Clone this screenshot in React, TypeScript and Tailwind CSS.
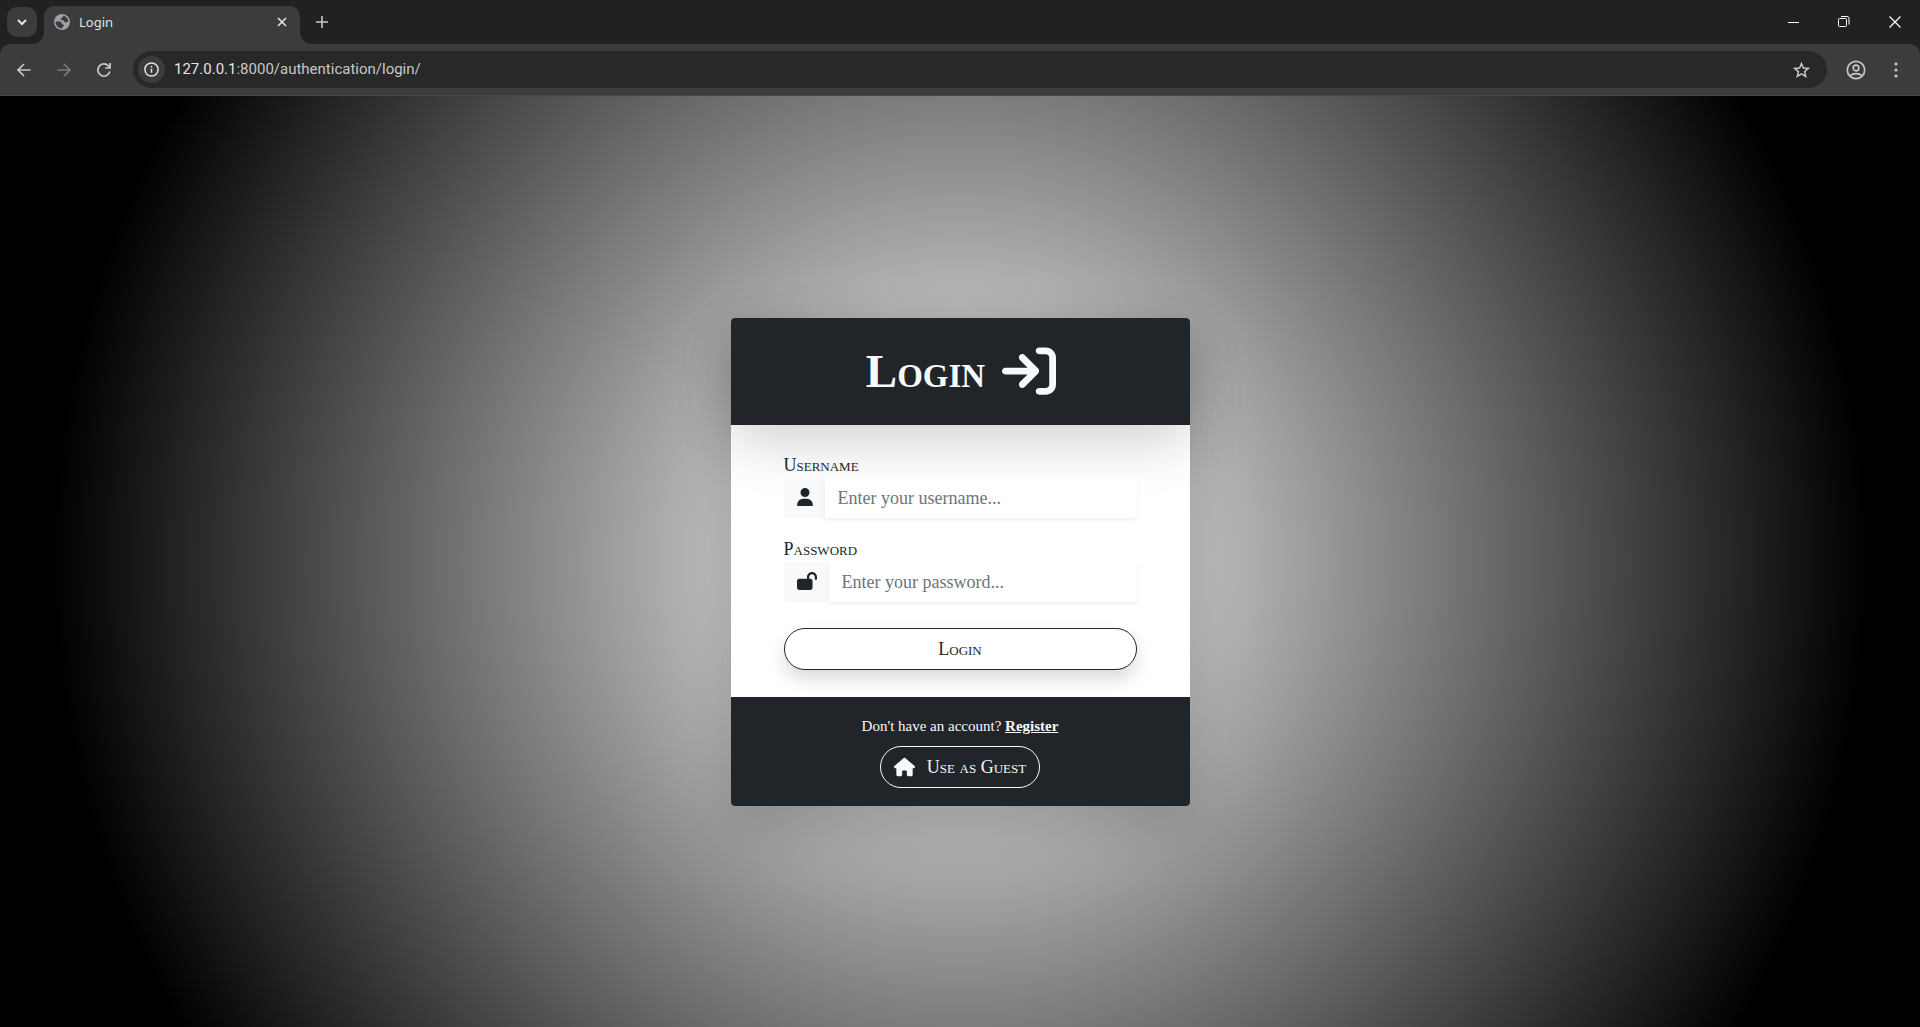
import React from 'react';
import { FaArrowRightToBracket, FaHouse, FaLockOpen, FaUser } from 'react-icons/fa6';

function TabStrip() {
  return (
    <div className="flex h-11 bg-[#202221]">
      <div className="w-11 shrink-0 pl-[7px] pt-[7px]">
        <button aria-label="Search tabs" className="flex h-[30px] w-[30px] items-center justify-center rounded-[10px] bg-[#3c3c3c] text-[#e3e3e3]">
          <svg width="10" height="10" viewBox="0 0 10 10" fill="none" stroke="currentColor" strokeWidth="2"><path d="M1 3l4 4 4-4" /></svg>
        </button>
      </div>
      <div className="relative mt-[6px] flex w-64 shrink-0 items-center rounded-t-[10px] bg-[#3c3c3c] pb-[6px] pl-[9px] pr-2">
        <span className="absolute -left-3 bottom-0 h-3 w-3 bg-[radial-gradient(circle_at_0_0,transparent_12px,#3c3c3c_12px)]" />
        <span className="absolute -right-3 bottom-0 h-3 w-3 bg-[radial-gradient(circle_at_100%_0,transparent_12px,#3c3c3c_12px)]" />
        <svg width="18" height="18" viewBox="0 0 18 18">
          <circle cx="9" cy="9" r="8" fill="#9aa0a6" />
          <path d="M2.500 8.500c2 0 4.500-.4 5.500.5 1 .8.200 1.800 1.200 2.300s1.800.2 1.800 1.200-1.800 1-1.800 2.200v.8C5.500 15.500 2.500 12.500 2.500 8.500zM10.500 2.700c2.500.6 4.700 3 5 5.800-1.300.2-2.200 1.300-3.500.8-1.200-.4-.8-1.700-1.800-2-1.200-.4-2.700.2-2.700-1s1.600-1 2-1.800.2-1.300 1-1.800z" fill="#3c3c3c" />
        </svg>
        <span className="ml-2 grow pt-0.5 text-[13px] text-[#e3e3e3]">Login</span>
        <button aria-label="Close tab" className="flex h-5 w-5 items-center justify-center text-[#e3e3e3]">
          <svg width="10" height="10" viewBox="0 0 10 10" fill="none" stroke="currentColor" strokeWidth="1.600"><path d="M1 1l8 8M9 1L1 9" /></svg>
        </button>
      </div>
      <button aria-label="New tab" className="ml-3 flex h-11 w-5 items-center justify-center text-[#c7c7c7]">
        <svg width="12" height="12" viewBox="0 0 12 12" fill="none" stroke="currentColor" strokeWidth="1.600"><path d="M6 0v12M0 6h12" /></svg>
      </button>
      <div className="ml-auto flex text-white">
        <button aria-label="Minimize" className="flex w-[50px] items-center justify-center">
          <svg width="11" height="11" viewBox="0 0 11 11" stroke="currentColor"><path d="M0 5.500h11" /></svg>
        </button>
        <button aria-label="Restore" className="flex w-[51px] items-center justify-center">
          <svg width="12" height="12" viewBox="0 0 12 12" fill="none" stroke="currentColor"><rect x=".5" y="2.500" width="8" height="8" rx="1" /><path d="M3 .5h6a2 2 0 0 1 2 2v6" /></svg>
        </button>
        <button aria-label="Close window" className="flex w-[51px] items-center justify-center">
          <svg width="12" height="12" viewBox="0 0 12 12" fill="none" stroke="currentColor" strokeWidth="1.200"><path d="M.5.5l11 11M11.500.5l-11 11" /></svg>
        </button>
      </div>
    </div>
  );
}

function Toolbar() {
  return (
    <div className="bg-[#202221]">
      <div className="flex h-[52px] items-center rounded-t-[10px] border-b border-[#4a4a4a] bg-[#3c3c3c] pl-1 text-[#c7c7c7]">
        <button aria-label="Back" className="flex h-10 w-10 items-center justify-center">
          <svg width="14" height="14" viewBox="0 0 14 14" fill="none" stroke="currentColor" strokeWidth="1.700"><path d="M13.500 7H1.500M7 1L1 7l6 6" /></svg>
        </button>
        <button aria-label="Forward" disabled className="flex h-10 w-10 items-center justify-center text-[#7c7c7c]">
          <svg width="14" height="14" viewBox="0 0 14 14" fill="none" stroke="currentColor" strokeWidth="1.700"><path d="M.5 7h12M7 1l6 6-6 6" /></svg>
        </button>
        <button aria-label="Reload" className="flex h-10 w-10 items-center justify-center">
          <svg width="14" height="14" viewBox="0 0 14 14" fill="none" stroke="currentColor" strokeWidth="1.700"><path d="M12.900 8.500A6.100 6.100 0 1 1 11.500 2.900L13 4.500M13.100 0v5H8.200" /></svg>
        </button>
        <div className="ml-[9px] flex h-[37px] grow items-center rounded-full bg-[#282828] pl-[5px] pr-[17px]">
          <button aria-label="View site information" className="flex h-[27px] w-[27px] shrink-0 items-center justify-center rounded-full bg-[#3c3c3c] text-[#e3e3e3]">
            <svg width="15" height="15" viewBox="0 0 15 15" fill="none" stroke="currentColor" strokeWidth="1.500"><circle cx="7.500" cy="7.500" r="6.600" /><path d="M7.500 6.700v4M7.500 4v1.500" /></svg>
          </button>
          <div className="grow pl-[9px] font-[Roboto,sans-serif] text-[15px] text-[#c7c7c7]"><span className="text-[#e3e3e3]">127.0.0.1</span>:8000/authentication/login/</div>
          <button aria-label="Bookmark this page">
            <svg width="17" height="16" viewBox="0 0 17 16" fill="none" stroke="currentColor" strokeWidth="1.500"><path d="M8.500 1.500l1.900 4.500 4.900.4-3.700 3.200 1.100 4.800-4.200-2.600-4.200 2.600 1.100-4.800L1.700 6.400l4.900-.4z" /></svg>
          </button>
        </div>
        <button aria-label="Profile" className="ml-[19px]">
          <svg width="20" height="20" viewBox="0 0 20 20" fill="none" stroke="currentColor" strokeWidth="1.700"><circle cx="10" cy="10" r="8.700" /><circle cx="10" cy="8" r="2.800" /><path d="M4 15.800c3-3 9-3 12 0" /></svg>
        </button>
        <button aria-label="Menu" className="ml-[22px] mr-4 flex w-4 justify-center">
          <svg width="4" height="16" viewBox="0 0 4 16" fill="currentColor"><circle cx="2" cy="2" r="1.600" /><circle cx="2" cy="8" r="1.600" /><circle cx="2" cy="14" r="1.600" /></svg>
        </button>
      </div>
    </div>
  );
}

type FieldProps = { id: string; label: string; type: string; placeholder: string; icon: React.ReactNode };

function Field({ id, label, type, placeholder, icon }: FieldProps) {
  return (
    <div>
      <label htmlFor={id} className="block h-[26px] text-[18px] leading-[26px] [font-variant:small-caps]">{label}</label>
      <div className="flex h-10">
        <span className="flex items-center rounded-l bg-[#f8f9fa] pb-[2px] pl-[13px] pr-3">{icon}</span>
        <input
          id={id}
          type={type}
          placeholder={placeholder}
          className="min-w-0 grow rounded-r bg-white px-[13px] pt-0.5 text-[18px] shadow-[0_2px_4px_rgba(0,0,0,0.075)] outline-none placeholder:text-[#6c757d]"
        />
      </div>
    </div>
  );
}

function LoginCard() {
  return (
    <form
      onSubmit={(e) => e.preventDefault()}
      className="w-[459px] rounded bg-white font-['Liberation_Serif',serif] text-[#212529] shadow-[0_18px_53px_rgba(0,0,0,0.175)]"
    >
      <header className="flex h-[107px] items-center justify-center gap-[17px] rounded-t bg-[#212529] pl-0.5 text-[#f8f9fa] shadow-[0_18px_53px_rgba(0,0,0,0.175)]">
        <h1 className="text-[47px] font-bold leading-none [font-variant:small-caps]">Login</h1>
        <FaArrowRightToBracket size={54} />
      </header>
      <div className="flex flex-col px-[53px] pb-[27px] pt-[27px]">
        <div className="flex flex-col gap-[18px]">
          <Field id="username" label="Username" type="text" placeholder="Enter your username..." icon={<FaUser className="h-[18px] w-4" />} />
          <Field id="password" label="Password" type="password" placeholder="Enter your password..." icon={<FaLockOpen className="h-[18px] w-5" />} />
        </div>
        <button className="mt-[26px] h-[42px] rounded-full border border-[#212529] bg-white pt-0.5 text-[18px] shadow-[0_9px_18px_rgba(0,0,0,0.15)] [font-variant:small-caps]">
          Login
        </button>
      </div>
      <footer className="flex flex-col items-center rounded-b bg-[#212529] pb-[18px] pt-[18px] text-[#f8f9fa]">
        <p className="text-[15px] leading-[23px]">
          Don't have an account? <a href="#register" className="font-bold underline">Register</a>
        </p>
        <button type="button" className="mt-2 flex h-[42px] items-center gap-3 rounded-full border border-[#f8f9fa] px-[13px] text-[18px]">
          <FaHouse className="h-5 w-[21px]" />
          <span className="pt-0.5 [font-variant:small-caps]">Use as Guest</span>
        </button>
      </footer>
    </form>
  );
}

export default function App() {
  return (
    <div className="flex min-h-screen flex-col font-['Noto_Sans',sans-serif]">
      <TabStrip />
      <Toolbar />
      <main className="flex grow items-center justify-center bg-[radial-gradient(circle,#fff,#000_85%)]">
        <LoginCard />
      </main>
    </div>
  );
}
